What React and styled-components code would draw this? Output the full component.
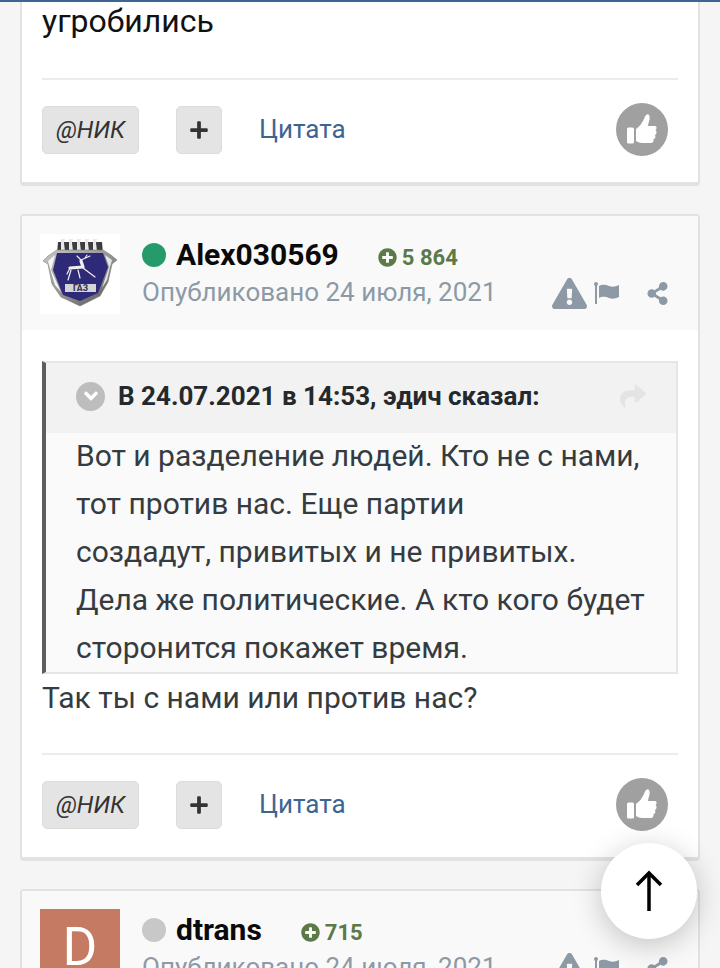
import React from 'react'
import styled, { createGlobalStyle } from 'styled-components'
import { FaExclamationTriangle, FaShareAlt, FaPlus, FaPlusCircle, FaAngleDown, FaShare } from 'react-icons/fa'

const Global = createGlobalStyle`
  html, body {
    margin: 0;
    padding: 0;
    height: 968px;
    overflow: hidden;
    background: #f5f5f5;
    font-family: Roboto, "Liberation Sans", sans-serif;
  }
`

const TopBar = styled.div`
  position: fixed;
  top: 0;
  left: 0;
  right: 0;
  height: 2px;
  background: #3d6594;
  z-index: 2;
`

const Feed = styled.div`
  display: flex;
  flex-direction: column;
  gap: 28px;
  padding: 0 20px;
  margin-top: -1px;
`

const Card = styled.article`
  background: #fff;
  border: 2px solid #e2e2e2;
  border-top-width: ${p => (p.$cut ? 0 : 2)}px;
  border-bottom-width: 4px;
  border-radius: 4px;
`

const Header = styled.header`
  display: flex;
  gap: 22px;
  height: 114px;
  padding: 18px 18px 0;
  box-sizing: border-box;
  background: #f9f9f9;
`

const Avatar = styled.div`
  width: 80px;
  height: 80px;
  flex: none;
  box-sizing: border-box;
  padding-bottom: ${p => (p.$bg ? 4 : 0)}px;
  display: flex;
  align-items: center;
  justify-content: center;
  background: ${p => p.$bg || '#fff'};
  color: #fff;
  font-size: 53px;
  line-height: 1;
`

const Meta = styled.div`
  flex: 1;
  min-width: 0;
`

const NameRow = styled.div`
  display: flex;
  align-items: center;
  height: 40px;
`

const Dot = styled.span`
  width: 24px;
  height: 24px;
  border-radius: 50%;
  flex: none;
  margin: 2px 10px 0 0;
  background: ${p => (p.$online ? '#279a6c' : '#c8c8c8')};
`

const Name = styled.strong`
  font-size: 30px;
  font-weight: 700;
  color: #0a0a0a;
  margin-right: 39px;
`

const Rep = styled.span`
  display: inline-flex;
  align-items: center;
  gap: 5px;
  margin-top: 6px;
  font-size: 22px;
  font-weight: 700;
  color: #5c7a48;
`

const DateRow = styled.div`
  display: flex;
  align-items: center;
  height: 36px;
  color: #8d9aa6;
`

const Posted = styled.span`
  font-size: 26px;
  white-space: nowrap;
  flex: 1;
`

const Tools = styled.div`
  display: flex;
  align-items: center;
  color: #8d9aa6;
  margin: 2px 11px 0 0;
`

const ToolAlert = styled.span`
  display: flex;
  margin-right: 7px;
`

const ToolShare = styled.span`
  display: flex;
  margin-left: 26px;
`

const Body = styled.div`
  margin-top: ${p => (p.$cut ? -2 : 0)}px;
  padding: ${p => (p.$cut ? '0 20px 33px' : '31px 20px')};
  font-size: ${p => (p.$cut ? 32 : 30)}px;
  line-height: 48px;
  color: ${p => (p.$cut ? '#111' : '#353c41')};
`

const Quote = styled.blockquote`
  margin: 0;
  border: 2px solid #e6e6e6;
  border-left: 4px solid #5e5e5e;
  background: #fafafa;
`

const QuoteHead = styled.div`
  display: flex;
  align-items: center;
  height: 66px;
  padding: 0 30px 4px;
  background: #f2f2f2;
  font-size: 26px;
  font-weight: 700;
  color: #24292d;
`

const Chevron = styled.span`
  width: 29px;
  height: 29px;
  border-radius: 50%;
  background: #bdbdbd;
  color: #fff;
  flex: none;
  display: flex;
  align-items: center;
  justify-content: center;
  margin-right: 13px;
`

const QuoteTitle = styled.span`
  flex: 1;
  white-space: nowrap;
`

const QuoteBody = styled.div`
  margin-top: -1px;
  padding: 0 30px;
  height: 240px;
  white-space: nowrap;
`

const Footer = styled.footer`
  margin: 0 20px;
  border-top: 2px solid #ececec;
  display: flex;
  align-items: center;
  height: 100px;
  padding-bottom: 2px;
`

const Button = styled.button`
  height: 48px;
  width: ${p => p.$w}px;
  margin-right: 37px;
  padding: 0 0 1px;
  border: 1px solid #dcdcdc;
  border-radius: 5px;
  background: #e4e4e4;
  color: #333;
  font: italic 400 24px Roboto, sans-serif;
  display: flex;
  align-items: center;
  justify-content: center;
`

const QuoteLink = styled.a`
  font-size: 26px;
  color: #3d6594;
  flex: 1;
  margin-bottom: 2px;
`

const Like = styled.span`
  width: 52px;
  height: 53px;
  border-radius: 50%;
  background: #a0a0a0;
  color: #fff;
  display: flex;
  align-items: center;
  justify-content: center;
  margin: 0 10px 2px 0;
`

const ScrollTop = styled.button`
  position: fixed;
  left: 601px;
  top: 843px;
  width: 96px;
  height: 96px;
  padding: 0;
  border: 0;
  border-radius: 50%;
  background: #fff;
  box-shadow: 0 6px 30px rgba(0, 0, 0, 0.22);
  display: flex;
  align-items: center;
  justify-content: center;
  z-index: 3;
`

const GazLogo = () => (
  <svg width="80" height="80" viewBox="0 0 80 80">
    <defs>
      <linearGradient id="silver" x1="0" y1="0" x2="1" y2="1">
        <stop offset="0" stopColor="#c8c8c8" />
        <stop offset="0.6" stopColor="#8a8a8a" />
        <stop offset="1" stopColor="#4a4a4a" />
      </linearGradient>
    </defs>
    <path d="M18 8h44l1 12H17z" fill="#3c3c3c" />
    <path d="M21 5h4l-1 4 1 8h-4zM29 5h4l-1 4 1 8h-4zM37 5h4l-1 4 1 8h-4zM45 5h4l-1 4 1 8h-4zM53 5h4l-1 4 1 8h-4z" fill="#e8e8e8" />
    <path d="M17 16 L8 22 L3 27 L8 30 L12 50 L21 63 L40 72 L60 62 L68 48 L72 30 L77 26 L71 21 L63 16 Z" fill="url(#silver)" stroke="#7a7a7a" strokeWidth="0.6" />
    <path d="M8 27 L15 21 L11 36 L21 58 L15 51 L11 38 Z" fill="#f7f7f7" />
    <path d="M72 26 L65 21 L69 33 L62 54 L67 46 L70 33 Z" fill="#e6e6e6" />
    <path d="M17 19 H63 L68 33 L58 59 L40 67 L23 61 L13 36 Z" fill="#2f2a78" />
    <g fill="none" stroke="#f0f0f0" strokeLinecap="round" strokeLinejoin="round">
      <path d="M30 34 L43 33 L41 27" strokeWidth="3.2" />
      <path d="M41 26 L37 22 M41 26 L50 22 M45 24 L47 21" strokeWidth="1.1" />
      <path d="M30 34 L27 40 M31 36 L28 46 M38 36 L40 44 M43 34 L55 43" strokeWidth="1.2" />
    </g>
    <rect x="25" y="50" width="31" height="8" fill="#d4d4d4" />
    <text x="40.5" y="57.2" textAnchor="middle" fontFamily="Roboto, sans-serif" fontWeight="900" fontSize="8.5" fill="#3a3a5a">ГАЗ</text>
  </svg>
)

const FlagIcon = () => (
  <svg width="26" height="22" viewBox="0 0 26 22" fill="currentColor">
    <rect x="1" y="1" width="2" height="21" />
    <circle cx="2" cy="2" r="2" />
    <path d="M5 4c4-2 7-1 10 0s6 1 10-1v12c-4 2-7 2-10 1s-6-2-10 0z" />
  </svg>
)

const ThumbIcon = () => (
  <svg width="32" height="32" viewBox="-16 -18 32 32" fill="currentColor">
    <rect x="-15" y="-3.5" width="7" height="16" rx="1.5" />
    <path d="M-6 -2C-2 -5 0 -8 2 -12C3 -16 6 -18 7 -16C9 -13 6 -8 6 -5L13 -5C15 -5 15 -2 13.5 -1C15 0 15 3 13 4C14 6 13 8 11.5 8C12 10 11 12 9 12L0 12C-2 12 -4 11 -6 10Z" />
  </svg>
)

const ArrowUp = () => (
  <svg width="28" height="42" viewBox="0 0 28 42" fill="none" stroke="#000" strokeWidth="3.5">
    <path d="M14 41V3" />
    <path d="M2 15L14 3l12 12" />
  </svg>
)

const PostHeader = ({ avatar, bg, online, name, rep }) => (
  <Header>
    <Avatar $bg={bg}>{avatar}</Avatar>
    <Meta>
      <NameRow>
        <Dot $online={online} />
        <Name>{name}</Name>
        <Rep><FaPlusCircle size={19} />{rep}</Rep>
      </NameRow>
      <DateRow>
        <Posted>Опубликовано 24 июля, 2021</Posted>
        <Tools>
          <ToolAlert><FaExclamationTriangle size={35} /></ToolAlert>
          <FlagIcon />
          <ToolShare><FaShareAlt size={23} /></ToolShare>
        </Tools>
      </DateRow>
    </Meta>
  </Header>
)

const PostFooter = () => (
  <Footer>
    <Button $w={97}>@НИК</Button>
    <Button $w={46}><FaPlus size={20} /></Button>
    <QuoteLink>Цитата</QuoteLink>
    <Like><ThumbIcon /></Like>
  </Footer>
)

const App = () => (
  <>
    <Global />
    <TopBar />
    <Feed>
      <Card $cut>
        <Body $cut>угробились</Body>
        <PostFooter />
      </Card>
      <Card>
        <PostHeader avatar={<GazLogo />} online name="Alex030569" rep="5 864" />
        <Body>
          <Quote>
            <QuoteHead>
              <Chevron><FaAngleDown size={22} /></Chevron>
              <QuoteTitle>В 24.07.2021 в 14:53, эдич сказал:</QuoteTitle>
              <FaShare size={26} color="#e4e4e4" />
            </QuoteHead>
            <QuoteBody>
              Вот и разделение людей. Кто не с нами,<br />
              тот против нас. Еще партии<br />
              создадут, привитых и не привитых.<br />
              Дела же политические. А кто кого будет<br />
              сторонится покажет время.
            </QuoteBody>
          </Quote>
          Так ты с нами или против нас?
        </Body>
        <PostFooter />
      </Card>
      <Card>
        <PostHeader avatar="D" bg="#c47a63" name="dtrans" rep="715" />
      </Card>
    </Feed>
    <ScrollTop><ArrowUp /></ScrollTop>
  </>
)

export default App
